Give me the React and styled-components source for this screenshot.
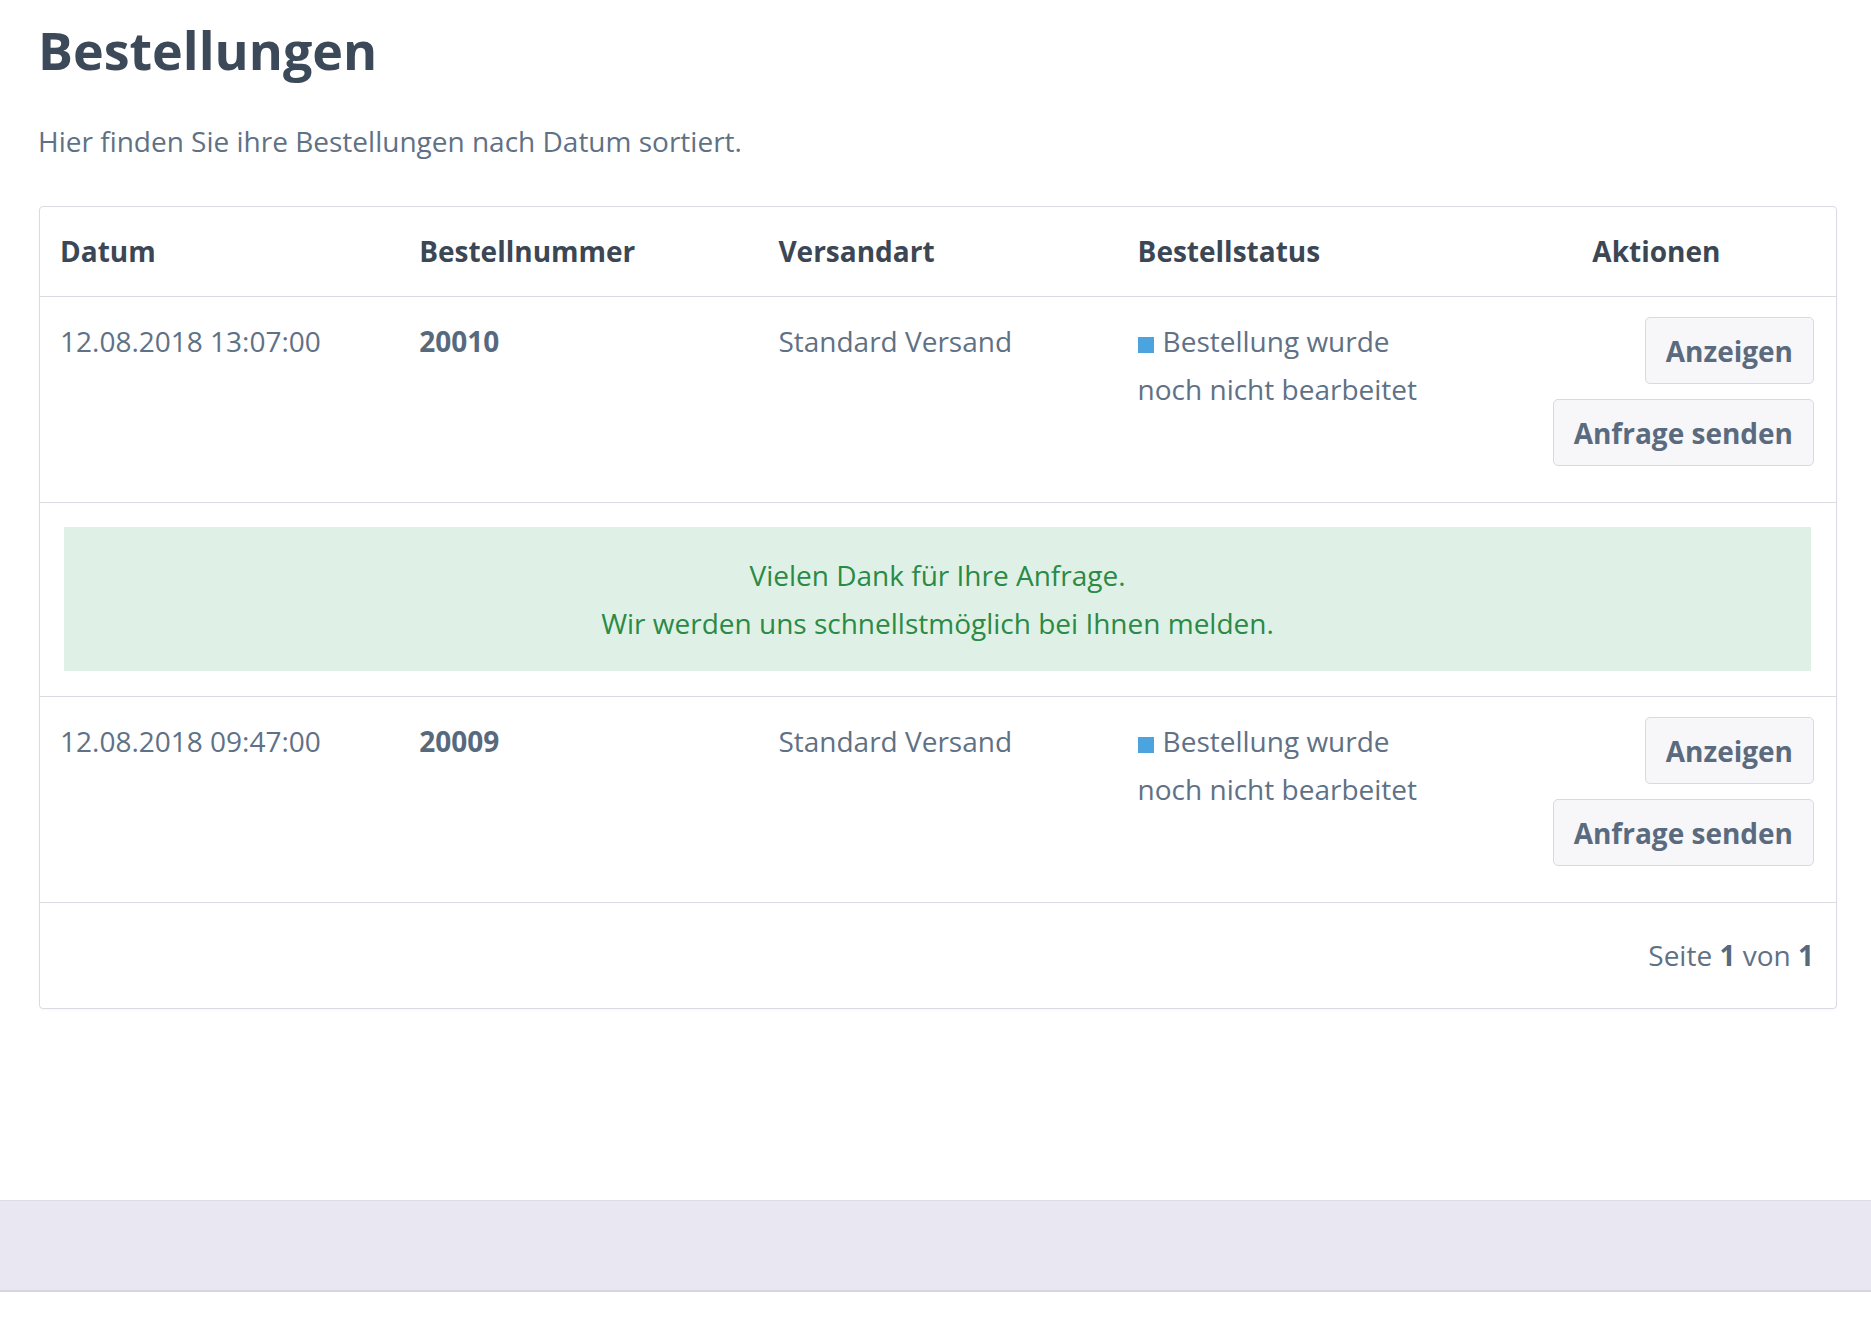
import React from "react";
import styled, { createGlobalStyle } from "styled-components";

const GlobalStyle = createGlobalStyle`
  html, body {
    margin: 0;
    padding: 0;
    background: #ffffff;
  }
  body {
    font-family: "Open Sans", "Noto Sans", "Liberation Sans", sans-serif;
    color: #5f7084;
    -webkit-font-smoothing: antialiased;
  }
  * { box-sizing: border-box; }
`;

const Page = styled.div`
  display: flex;
  flex-direction: column;
  min-height: 1337px;
`;

const Main = styled.main`
  padding: 18px 34px 0 39px;
  height: 1200px;
`;

const Title = styled.h1`
  margin: 0 0 0 -1px;
  font-size: 52px;
  line-height: 64px;
  font-weight: 700;
  color: #3c4958;
`;

const Intro = styled.p`
  margin: 35px 0 0 -1px;
  font-size: 28px;
  line-height: 48px;
  color: #607185;
`;

const Card = styled.section`
  margin-top: 41px;
  width: 1798px;
  border: 1px solid #dadae2;
  border-radius: 4px;
  box-shadow: 0 1px 2px rgba(40, 40, 70, 0.04);
  background: #fff;
`;

const Grid = styled.div`
  display: grid;
  grid-template-columns: repeat(5, 1fr);
  border-bottom: 1px solid #dadae2;
`;

const HeadCell = styled.div`
  padding: 20px 20px 21px;
  font-size: 28px;
  line-height: 48px;
  font-weight: 700;
  color: #3b4754;
  text-align: ${(p) => (p.$center ? "center" : "left")};
`;

const Cell = styled.div`
  padding: 20px;
  font-size: 28px;
  line-height: 48px;
  color: #607185;
  font-weight: ${(p) => (p.$bold ? 700 : 400)};
  ${(p) => p.$bold && "color: #58697d;"}
`;

const StatusDot = styled.span`
  display: inline-block;
  width: 16px;
  height: 16px;
  margin-right: 9px;
  background: #4ba3e0;
  vertical-align: -1px;
`;

const Actions = styled.div`
  padding: 20px 22px 21px 20px;
  display: flex;
  flex-direction: column;
  align-items: flex-end;
`;

const Button = styled.button`
  height: 67px;
  padding: 0 20px;
  margin-bottom: 15px;
  display: inline-flex;
  align-items: center;
  font-family: inherit;
  font-size: 28px;
  font-weight: 700;
  color: #5a6b7f;
  background: #f7f7fa;
  border: 1px solid #d8d9e1;
  border-radius: 5px;
  cursor: pointer;
`;

const MessageRow = styled.div`
  padding: 24px 25px 25px 24px;
  border-bottom: 1px solid #dadae2;
`;

const Success = styled.div`
  background: #dff1e6;
  color: #2b8a45;
  text-align: center;
  font-size: 28px;
  line-height: 48px;
  padding: 24px;
`;

const Footer = styled.div`
  padding: 28px 22px 29px;
  text-align: right;
  font-size: 28px;
  line-height: 48px;
  color: #607185;
  b {
    font-weight: 700;
    color: #58697d;
  }
`;

const Band = styled.div`
  height: 92px;
  background: #e9e8f2;
  border-top: 1px solid #dcdce5;
  border-bottom: 2px solid #d6d6de;
`;

const orders = [
  { date: "12.08.2018 13:07:00", nr: "20010", shipping: "Standard Versand", message: true },
  { date: "12.08.2018 09:47:00", nr: "20009", shipping: "Standard Versand", message: false },
];

function OrderRow({ order }) {
  return (
    <Grid>
      <Cell>{order.date}</Cell>
      <Cell $bold>{order.nr}</Cell>
      <Cell>{order.shipping}</Cell>
      <Cell>
        <StatusDot />
        Bestellung wurde
        <br />
        noch nicht bearbeitet
      </Cell>
      <Actions>
        <Button>Anzeigen</Button>
        <Button>Anfrage senden</Button>
      </Actions>
    </Grid>
  );
}

export default function App() {
  return (
    <Page>
      <GlobalStyle />
      <Main>
        <Title>Bestellungen</Title>
        <Intro>Hier finden Sie ihre Bestellungen nach Datum sortiert.</Intro>
        <Card>
          <Grid>
            <HeadCell>Datum</HeadCell>
            <HeadCell>Bestellnummer</HeadCell>
            <HeadCell>Versandart</HeadCell>
            <HeadCell>Bestellstatus</HeadCell>
            <HeadCell $center>Aktionen</HeadCell>
          </Grid>
          {orders.map((o) => (
            <React.Fragment key={o.nr}>
              <OrderRow order={o} />
              {o.message && (
                <MessageRow>
                  <Success>
                    Vielen Dank für Ihre Anfrage.
                    <br />
                    Wir werden uns schnellstmöglich bei Ihnen melden.
                  </Success>
                </MessageRow>
              )}
            </React.Fragment>
          ))}
          <Footer>
            Seite <b>1</b> von <b>1</b>
          </Footer>
        </Card>
      </Main>
      <Band />
    </Page>
  );
}
